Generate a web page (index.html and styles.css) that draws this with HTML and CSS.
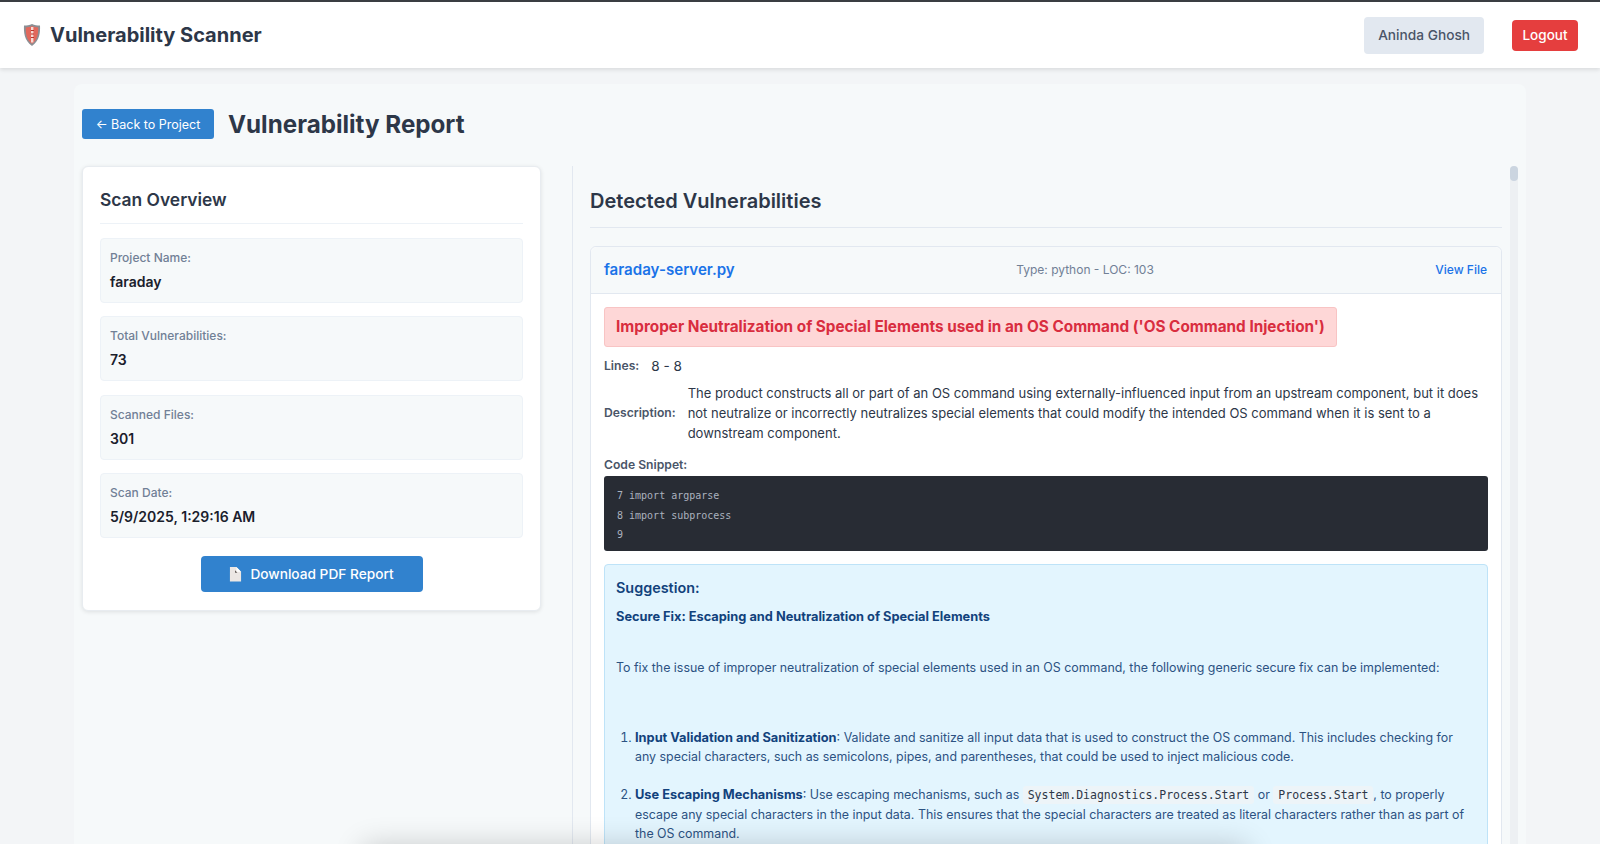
FILE: index.html
```html
<!DOCTYPE html>
<html lang="en">
<head>
    <meta charset="UTF-8">
    <meta name="viewport" content="width=device-width, initial-scale=1.0">
    <title>Vulnerability Report</title>
    <link rel="stylesheet" href="styles.css">
</head>
<body>
    <header class="topbar">
        <div class="brand">
            <svg class="brand-icon" viewBox="0 0 18 24" width="18" height="24">
                <path d="M9 1C6.500 2.200 3.800 2.600 1 2.600 .7 9 1 17.500 9 23c8-5.500 8.300-14 8-20.400C14.200 2.600 11.500 2.200 9 1z" fill="#8b8f94"/>
                <path d="M9 3C7 4 5 4.300 2.800 4.400 2.700 10 3.300 17 9 20.800 14.700 17 15.300 10 15.200 4.400 13 4.300 11 4 9 3z" fill="#e2685c"/>
                <path d="M8 4h2.400v15.500H8z" fill="#f6d9d3"/>
                <path d="M8 7.500h3M8 11h3M8 14.500h3" stroke="#b8362c" stroke-width="1.200"/>
            </svg>
            <span class="brand-name">Vulnerability Scanner</span>
        </div>
        <div class="user-area">
            <span class="user-chip">Aninda Ghosh</span>
            <button class="logout-btn">Logout</button>
        </div>
    </header>

    <main class="container">
        <div class="report-head">
            <a class="back-btn" href="#">← Back to Project</a>
            <h1>Vulnerability Report</h1>
        </div>

        <div class="columns">
            <section class="overview">
                <h2>Scan Overview</h2>
                <div class="stat">
                    <div class="stat-label">Project Name:</div>
                    <div class="stat-value">faraday</div>
                </div>
                <div class="stat">
                    <div class="stat-label">Total Vulnerabilities:</div>
                    <div class="stat-value">73</div>
                </div>
                <div class="stat">
                    <div class="stat-label">Scanned Files:</div>
                    <div class="stat-value">301</div>
                </div>
                <div class="stat">
                    <div class="stat-label">Scan Date:</div>
                    <div class="stat-value">5/9/2025, 1:29:16 AM</div>
                </div>
                <button class="download-btn">
                    <svg viewBox="0 0 14 16" width="13" height="15">
                        <path d="M1 0h7l5 5v10.500H1z" fill="#ece7e4"/>
                        <path d="M8 0l5 5H8z" fill="#ffffff"/>
                        <path d="M6.500 3.500l2.500 2.500H6.500z" fill="#5b5450"/>
                    </svg>
                    Download PDF Report
                </button>
            </section>

            <section class="findings">
                <h2>Detected Vulnerabilities</h2>
                <article class="file-card">
                    <div class="file-head">
                        <a class="file-name" href="#">faraday-server.py</a>
                        <span class="file-meta">Type: python - LOC: 103</span>
                        <a class="file-link" href="#">View File</a>
                    </div>
                    <div class="file-body">
                        <div class="vuln-title">Improper Neutralization of Special Elements used in an OS Command ('OS Command Injection')</div>
                        <div class="detail-row lines-row">
                            <span class="detail-label">Lines:</span>
                            <span>8 - 8</span>
                        </div>
                        <div class="detail-row desc-row">
                            <span class="detail-label">Description:</span>
                            <span class="desc-text">The product constructs all or part of an OS command using externally-influenced input from an upstream component, but it does not neutralize or incorrectly neutralizes special elements that could modify the intended OS command when it is sent to a downstream component.</span>
                        </div>
                        <div class="detail-label snippet-label">Code Snippet:</div>
                        <pre class="snippet">7 import argparse
8 import subprocess
9</pre>
                        <div class="suggestion">
                            <h3>Suggestion:</h3>
                            <p class="fix-title">Secure Fix: Escaping and Neutralization of Special Elements</p>
                            <p class="fix-intro">To fix the issue of improper neutralization of special elements used in an OS command, the following generic secure fix can be implemented:</p>
                            <ol>
                                <li><strong>Input Validation and Sanitization</strong>: Validate and sanitize all input data that is used to construct the OS command. This includes checking for any special characters, such as semicolons, pipes, and parentheses, that could be used to inject malicious code.</li>
                                <li><strong>Use Escaping Mechanisms</strong>: Use escaping mechanisms, such as <code>System.Diagnostics.Process.Start</code> or <code>Process.Start</code>, to properly escape any special characters in the input data. This ensures that the special characters are treated as literal characters rather than as part of the OS command.</li>
                            </ol>
                        </div>
                    </div>
                </article>
                <div class="scroll-track"><div class="scroll-thumb"></div></div>
            </section>
        </div>
    </main>

    <div class="bottom-shade"></div>
</body>
</html>
```

FILE: styles.css
```css
* {
    box-sizing: border-box;
}
html, body {
    height: 100%;
}
body {
    margin: 0;
    overflow: hidden;
    font-family: Inter, "Liberation Sans", sans-serif;
    background-color: #f3f5f7;
    color: #2d3748;
}

/* top bar */
.topbar {
    display: flex;
    align-items: center;
    justify-content: space-between;
    height: 68px;
    padding: 0 22px 0 23px;
    background: #ffffff;
    border-top: 2px solid #3a3d42;
    box-shadow: 0 2px 4px rgba(0, 0, 0, 0.1);
    position: relative;
}
.brand {
    display: flex;
    align-items: center;
    gap: 9px;
}
.brand-name {
    font-size: 20px;
    font-weight: 700;
}
.user-area {
    display: flex;
    align-items: center;
    gap: 28px;
}
.user-chip {
    height: 37px;
    padding: 0 14px;
    border-radius: 4px;
    background: #e2e8f0;
    color: #4a5568;
    font-size: 13.700px;
    font-weight: 500;
    line-height: 37px;
}
.logout-btn {
    height: 31px;
    width: 66px;
    padding: 0;
    border: none;
    border-radius: 4px;
    background: #e53e3e;
    color: #ffffff;
    font-family: inherit;
    font-size: 13.500px;
    font-weight: 500;
}

/* main */
.container {
    width: 1452px;
    height: 900px;
    margin: 16px 0 0 74px;
    padding: 25px 8px 0;
    background: #f6f9fa;
    border-radius: 8px;
}
.report-head {
    display: flex;
    align-items: center;
    gap: 14px;
    height: 30px;
    margin-bottom: 27px;
}
.back-btn {
    display: block;
    width: 132px;
    height: 30px;
    border-radius: 3px;
    background: #3182ce;
    color: #ffffff;
    font-size: 12.500px;
    line-height: 31px;
    text-align: center;
    text-decoration: none;
}
h1 {
    margin: 0;
    font-size: 24.200px;
    font-weight: 700;
}
.columns {
    display: flex;
    align-items: flex-start;
}

/* left card */
.overview {
    width: 459px;
    flex-shrink: 0;
    padding: 19px 17px 18px;
    background: #ffffff;
    border: 1px solid #e8ecf0;
    border-radius: 6px;
    box-shadow: 0 1px 4px rgba(0, 0, 0, 0.1);
}
.overview h2 {
    margin: 0 0 13.500px;
    padding-bottom: 9px;
    border-bottom: 1px solid #edf2f7;
    font-size: 17.400px;
    font-weight: 600;
    line-height: 28px;
}
.stat {
    height: 65px;
    margin-bottom: 13.600px;
    padding: 10px 9px;
    background: #f6f9fa;
    border: 1px solid #edf2f7;
    border-radius: 4px;
}
.stat-label {
    margin-bottom: 6px;
    color: #718096;
    font-size: 12px;
    font-weight: 500;
    line-height: 17px;
}
.stat-value {
    color: #1a202c;
    font-size: 14px;
    font-weight: 600;
    line-height: 20px;
}
.download-btn {
    display: flex;
    align-items: center;
    justify-content: center;
    gap: 8px;
    width: 222px;
    height: 36px;
    margin: 18px auto 0;
    border: none;
    border-radius: 4px;
    background: #3182ce;
    color: #ffffff;
    font-family: inherit;
    font-size: 13.700px;
    font-weight: 500;
}

/* right pane */
.findings {
    position: relative;
    flex: 1;
    margin-left: 31px;
    padding: 0 16px 0 17px;
    border-left: 1px solid #e2e8f0;
}
.findings h2 {
    margin: 0 0 18px;
    padding: 20px 0 10px;
    border-bottom: 1px solid #e2e8f0;
    font-size: 20px;
    font-weight: 600;
    line-height: 31px;
}
.file-card {
    background: #ffffff;
    border: 1px solid #e2e8f0;
    border-radius: 6px;
}
.file-head {
    display: flex;
    align-items: center;
    justify-content: space-between;
    height: 47px;
    padding: 0 14px 1px 13px;
    background: #f6f9fa;
    border-bottom: 1px solid #e2e8f0;
    border-radius: 6px 6px 0 0;
}
.file-name {
    color: #1a73e8;
    font-size: 15.100px;
    font-weight: 600;
    text-decoration: none;
}
.file-meta {
    color: #718096;
    font-size: 12px;
}
.file-link {
    color: #1a73e8;
    font-size: 12px;
    font-weight: 500;
    text-decoration: none;
}
.file-body {
    padding: 13px 13px 0;
}
.vuln-title {
    display: inline-block;
    height: 40px;
    padding: 0 11px;
    background: #fed7d7;
    border: 1px solid #f8c4c4;
    border-radius: 3px;
    color: #d92d3f;
    font-size: 15.300px;
    font-weight: 700;
    line-height: 38px;
}
.detail-row {
    display: flex;
    align-items: center;
    color: #2d3748;
    font-size: 13.600px;
    line-height: 20px;
}
.lines-row {
    gap: 12px;
    margin-top: 9px;
}
.desc-row {
    gap: 12px;
    margin-top: 7px;
}
.desc-text {
    flex: 1;
    font-size: 13px;
}
.detail-label {
    color: #4a5568;
    font-size: 12.160px;
    font-weight: 600;
}
.snippet-label {
    margin-top: 13px;
    line-height: 18px;
}
.snippet {
    margin: 2px 0 13px;
    height: 75px;
    padding: 10px 13px;
    background: #282c34;
    border-radius: 3px;
    color: #abb2bf;
    font-family: "DejaVu Sans Mono", "Liberation Mono", monospace;
    font-size: 10px;
    line-height: 19.500px;
}
.suggestion {
    padding: 13px 11px 20px;
    background: #e3f5fe;
    border: 1px solid #bee3f8;
    border-radius: 4px;
    color: #2c5282;
    font-size: 12.400px;
    line-height: 19px;
}
.suggestion h3 {
    margin: 0;
    color: #12427c;
    font-size: 14.400px;
    font-weight: 600;
    line-height: 20px;
}
.fix-title {
    margin: 9px 0 0;
    color: #12427c;
    font-size: 12.800px;
    font-weight: 700;
}
.fix-intro {
    margin: 32px 0 0;
}
.suggestion ol {
    margin: 51px 0 0;
    padding-left: 19px;
}
.suggestion li {
    margin-bottom: 19px;
}
.suggestion strong {
    color: #12427c;
    font-size: 12.800px;
    font-weight: 700;
}
.suggestion code {
    padding: 2px 5px;
    background: #edf4f8;
    border-radius: 3px;
    color: #2d3748;
    font-family: "DejaVu Sans Mono", "Liberation Mono", monospace;
    font-size: 11.500px;
}

/* page-level overlays */
.scroll-track {
    position: absolute;
    top: 0;
    right: 0;
    width: 8px;
    height: 700px;
    background: #edf0f3;
    border-radius: 4px;
}
.scroll-thumb {
    height: 15px;
    background: #cbd5e0;
    border-radius: 4px;
}
.bottom-shade {
    position: fixed;
    left: 375px;
    bottom: -34px;
    width: 860px;
    height: 20px;
    box-shadow: 0 0 30px 12px rgba(0, 0, 0, 0.2);
}
```
